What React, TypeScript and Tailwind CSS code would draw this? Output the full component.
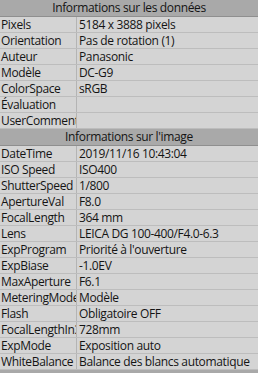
import React from 'react';

type Row = [string, string];

const sections: { title: string; rows: Row[] }[] = [
    {
        title: 'Informations sur les données',
        rows: [
            ['Pixels', '5184 x 3888 pixels'],
            ['Orientation', 'Pas de rotation (1)'],
            ['Auteur', 'Panasonic'],
            ['Modèle', 'DC-G9'],
            ['ColorSpace', 'sRGB'],
            ['Évaluation', ''],
            ['UserComment', ''],
        ],
    },
    {
        title: "Informations sur l'image",
        rows: [
            ['DateTime', '2019/11/16 10:43:04'],
            ['ISO Speed', 'ISO400'],
            ['ShutterSpeed', '1/800'],
            ['ApertureVal', 'F8.0'],
            ['FocalLength', '364 mm'],
            ['Lens', 'LEICA DG 100-400/F4.0-6.3'],
            ['ExpProgram', "Priorité à l'ouverture"],
            ['ExpBiase', '-1.0EV'],
            ['MaxAperture', 'F6.1'],
            ['MeteringMode', 'Modèle'],
            ['Flash', 'Obligatoire OFF'],
            ['FocalLengthIn35mm', '728mm'],
            ['ExpMode', 'Exposition auto'],
            ['WhiteBalance', 'Balance des blancs automatique'],
        ],
    },
    {
        title: 'GPS',
        rows: [],
    },
];

const App: React.FC = () => {
    return (
        <div
            className="w-[258px] h-[373px] overflow-hidden bg-[#d4d4d4] text-[#141414] text-[12px] leading-none tracking-[-0.35px]"
            style={{ fontFamily: '"Open Sans", "Noto Sans", sans-serif' }}
        >
            {sections.map(sec => (
                <div key={sec.title}>
                    {/* section header */}
                    <div className="h-[17px] bg-[#a9a9a9] border-b border-[#8f8f8f] flex items-center justify-center whitespace-nowrap">
                        {sec.title}
                    </div>
                    {sec.rows.map(([k, v]) => (
                        <div key={k} className="h-4 flex border-b border-[#bdbdbd]">
                            <div className="w-[77px] shrink-0 border-r border-[#b4b4b4] pl-[1px] flex items-center overflow-hidden whitespace-nowrap">
                                {k}
                            </div>
                            <div className="flex-1 pl-[2px] flex items-center overflow-hidden whitespace-nowrap">
                                {v}
                            </div>
                        </div>
                    ))}
                </div>
            ))}
        </div>
    );
};

export default App;
